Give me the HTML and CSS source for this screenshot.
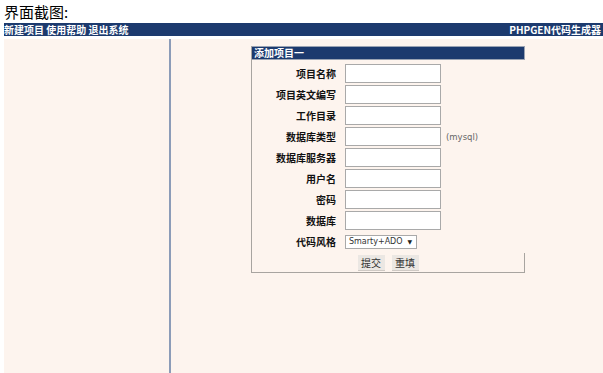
FILE: index.html
```html
<!DOCTYPE html>
<html lang="zh-CN">
<head>
<meta charset="utf-8">
<title>界面截图</title>
<link rel="stylesheet" href="styles.css">
</head>
<body>
<div class="title">界面截图:</div>
<div class="shot">
  <div class="topbar">
    <div class="menu">新建项目 使用帮助 退出系统</div>
    <div class="brand">PHPGEN代码生成器</div>
  </div>
  <div class="main">
    <div class="side"></div>
    <div class="content">
      <div class="panel">
        <div class="panel-head">添加项目一</div>
        <div class="rows">
          <div class="label">项目名称</div><div class="field"><span class="input"></span></div>
          <div class="label">项目英文编写</div><div class="field"><span class="input"></span></div>
          <div class="label">工作目录</div><div class="field"><span class="input"></span></div>
          <div class="label">数据库类型</div><div class="field"><span class="input"></span><span class="hint">(mysql)</span></div>
          <div class="label">数据库服务器</div><div class="field"><span class="input"></span></div>
          <div class="label">用户名</div><div class="field"><span class="input"></span></div>
          <div class="label">密码</div><div class="field"><span class="input"></span></div>
          <div class="label">数据库</div><div class="field"><span class="input"></span></div>
          <div class="label">代码风格</div><div class="field"><span class="select">Smarty+ADO<span class="arrow">▼</span></span></div>
        </div>
        <div class="actions">
          <span class="btn">提交</span>
          <span class="btn">重填</span>
        </div>
      </div>
    </div>
  </div>
</div>
</body>
</html>
```
FILE: styles.css
```css
html, body {
  margin: 0;
  padding: 0;
  background: #ffffff;
  font-family: "Noto Sans CJK SC", "Liberation Sans", sans-serif;
}

.title {
  height: 23px;
  padding-left: 4px;
  font-size: 15px;
  line-height: 23px;
  color: #000;
}

.shot {
  margin-left: 4px;
}

.topbar {
  height: 13px;
  background: #1c3a6e;
  color: #fff;
  font-size: 10px;
  font-weight: 700;
  line-height: 13px;
  display: flex;
  justify-content: space-between;
  padding-right: 2px;
  white-space: nowrap;
}

.main {
  margin-top: 3px;
  height: 334px;
  background: #fdf4ee;
  display: flex;
}

.side {
  width: 165px;
  flex: none;
  border-right: 2px solid #8c9cb8;
}

.content {
  flex: 1;
}

.panel {
  margin: 8px 0 0 80px;
  width: 273px;
  border-left: 1px solid #a8a4a0;
  border-bottom: 1px solid #a8a4a0;
}

.panel-head {
  height: 12px;
  background: #1c3a6e;
  color: #fff;
  font-size: 10px;
  font-weight: 700;
  line-height: 12px;
  padding-left: 2px;
  border: 1px solid #9aa3b3;
  border-left: none;
  margin-top: -1px;
}

.rows {
  display: grid;
  grid-template-columns: 88px 1fr;
  column-gap: 5px;
  row-gap: 2px;
  padding-top: 4px;
  align-items: center;
}

.label {
  height: 19px;
  line-height: 19px;
  text-align: right;
  padding-right: 4px;
  font-size: 10px;
  font-weight: 700;
  color: #111;
  white-space: nowrap;
}

.field {
  height: 19px;
  display: flex;
  align-items: center;
}

.input {
  display: block;
  width: 96px;
  height: 19px;
  box-sizing: border-box;
  background: #fff;
  border: 1px solid #a9a9a9;
}

.hint {
  margin-left: 5px;
  font-family: "DejaVu Sans", sans-serif;
  font-size: 8.5px;
  color: #666;
}

.select {
  display: flex;
  align-items: center;
  justify-content: space-between;
  width: 72px;
  height: 14px;
  box-sizing: border-box;
  padding: 0 4px 0 3px;
  background: #fff;
  border: 1px solid #a9a9a9;
  font-family: "DejaVu Sans", sans-serif;
  font-size: 8px;
  color: #333;
}

.arrow {
  font-size: 6px;
  color: #222;
}

.actions {
  margin-top: 2px;
  height: 19px;
  display: flex;
  justify-content: center;
  align-items: center;
  gap: 7px;
  border-right: 1px solid #a8a4a0;
}

.btn {
  display: inline-block;
  width: 27px;
  height: 16px;
  line-height: 16px;
  text-align: center;
  background: #ebe7e3;
  border-bottom: 1px solid #cfc9c4;
  font-size: 10px;
  color: #333;
  box-sizing: border-box;
}
```
